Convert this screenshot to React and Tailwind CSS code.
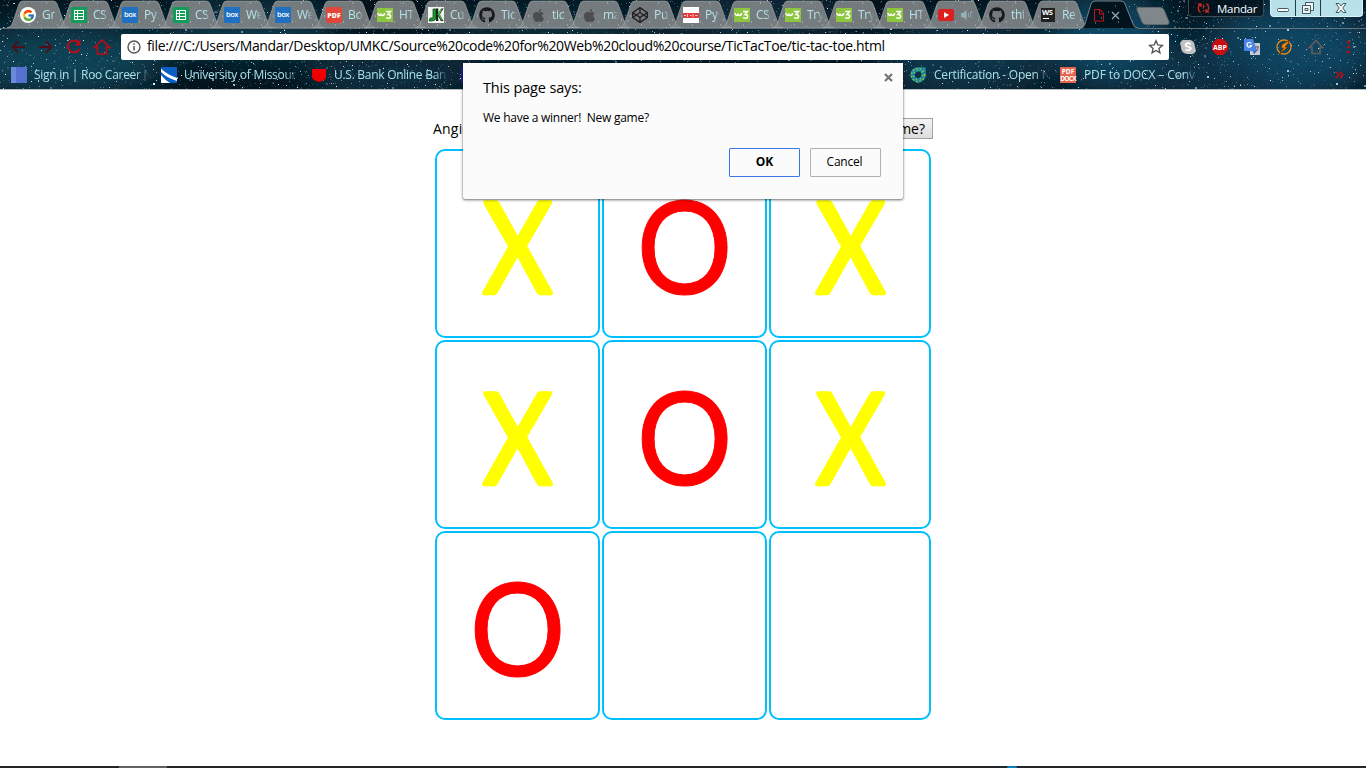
import React from "react";
import { FcGoogle } from "react-icons/fc";
import { FaGithub, FaApple, FaCodepen } from "react-icons/fa";

const UI = "font-['Open_Sans','Noto_Sans',sans-serif]";

/* ---------- starfield behind the browser chrome ---------- */
function makeStars(count, seed) {
  let s = seed;
  const rnd = () => {
    s = (s * 1664525 + 1013904223) % 4294967296;
    return s / 4294967296;
  };
  const tones = ["#e6f0f4", "#a9c6d2", "#6f93a3", "#4c7183", "#35586a", "#2a4a5b", "#1f3f50", "#1a3746"];
  return Array.from({ length: count }, () => {
    const x = Math.floor(rnd() * 1366);
    const y = Math.floor(rnd() * 89);
    const k = rnd();
    const big = rnd() < 0.04;
    return { x, y, c: tones[Math.floor(Math.pow(k, 0.55) * 8)], w: big ? 2 : 1 };
  });
}
const STARS = makeStars(6500, 77);
const CLOUDS = [
  [60, 60, 110, 35, "#0f4558"], [250, 30, 90, 30, "#0d384a"], [560, 35, 120, 25, "#0a2d3d"],
  [760, 20, 90, 30, "#0a2b3a"], [960, 60, 90, 40, "#0c3649"], [1110, 40, 60, 50, "#0f4664"],
  [1290, 50, 90, 50, "#0d4462"], [390, 75, 90, 20, "#0c384b"], [1200, 75, 60, 30, "#0b3346"],
];

function Starfield() {
  return (
    <svg className="absolute inset-0" width="1366" height="89" shapeRendering="crispEdges">
      <defs>
        <filter id="soft" x="-50%" y="-50%" width="200%" height="200%">
          <feGaussianBlur stdDeviation="18" />
        </filter>
      </defs>
      <rect width="1366" height="89" fill="#04121b" />
      <g filter="url(#soft)">
        {CLOUDS.map(([x, y, rx, ry, c], i) => (
          <ellipse key={i} cx={x} cy={y} rx={rx} ry={ry} fill={c} />
        ))}
      </g>
      {STARS.map((s, i) => (
        <rect key={i} x={s.x} y={s.y} width={s.w} height={s.w} fill={s.c} />
      ))}
    </svg>
  );
}

/* ---------- favicons ---------- */
const Google = () => (
  <span className="flex size-4 items-center justify-center rounded-full bg-white"><FcGoogle size={13} /></span>
);
const Sheets = () => (
  <svg width="16" height="16" shapeRendering="crispEdges">
    <rect width="16" height="16" rx="1" fill="#0f9d58" />
    <path d="M3.5 3.5h9v9h-9zM3.5 6.5h9M3.5 9.5h9M6.5 3.5v9" stroke="#fff" fill="none" />
  </svg>
);
const Box = () => (
  <span className="flex size-4 items-center justify-center rounded-[1px] bg-[#1f70c1] pb-px font-['Open_Sans',sans-serif] text-[7.500px] leading-none font-semibold tracking-[-0.5px] text-white">box</span>
);
const Pdf = () => (
  <span className="flex size-4 items-center justify-center rounded-[2px] bg-[#e2463a] font-['Open_Sans',sans-serif] text-[7px] leading-none font-extrabold text-white">PDF</span>
);
const W3 = () => (
  <svg width="16" height="16">
    <rect width="16" height="14" y="1" fill="#8cc63e" />
    <path d="M1 6c0 3 2.800 3 3 .6c.2 2.600 3.400 2.600 3.600-.6M9 4.500h4.500l-2.600 3c2 0 3.200.8 2.600 2.600c-.8 1.600-3 1.500-4.500.4" fill="none" stroke="#fff" strokeWidth="1.500" />
  </svg>
);
const JK = () => (
  <svg width="16" height="16">
    <rect width="16" height="16" fill="#f2f5f0" />
    <path d="M5 2h3v8q0 4-4 4H1l1-3h2q1 0 1-1z" fill="#1c9c2b" stroke="#103c14" strokeWidth=".7" />
    <path d="M8 1.500h2.300v4.500l3-4.500h2.200l-3.600 6 3.600 6.500h-2.700l-2.500-5v5H8z" fill="#222" />
    <path d="M10 8l3.500-5.500M11 7.500l3 5.500" stroke="#35c443" strokeWidth="1.400" />
  </svg>
);
const Python = () => (
  <svg width="16" height="16">
    <rect width="16" height="16" fill="#fff" />
    <path d="M0 6h16v5H0z" fill="#e33b3b" />
    <path d="M1 8.500h2M4.500 7v3M7 8.500h1.500M10 7v3M12 8.500h2.500" stroke="#f8c5c5" />
  </svg>
);
const Tube = () => (
  <svg width="16" height="16"><rect y="2" width="16" height="12" rx="2.500" fill="#d9201f" /><path d="M6 5l5 3-5 3z" fill="#fff" /></svg>
);
const Storm = () => (
  <span className="flex h-3.5 w-3.5 flex-col bg-[#222] px-px font-['Open_Sans',sans-serif] text-[7.500px] leading-[9px] font-bold tracking-[-0.4px] text-white">
    WS
    <span className="mt-px ml-px h-px w-[6px] bg-white" />
  </span>
);
const DocIcon = () => (
  <svg width="16" height="16"><path d="M3.500 2.500h5.500l3.500 4v7.500h-9zM8.500 2.500v4.500h4" fill="none" stroke="#b5121b" strokeWidth="1.100" /></svg>
);
const Speaker = () => (
  <svg width="14" height="14" fill="none" stroke="#93b4ba">
    <path d="M1 5h2l3.500-3v10L3 9H1z" fill="#93b4ba" stroke="none" /><path d="M8.500 5v4M10.500 4v6" opacity=".7" /><path d="M12.500 3v8" opacity=".3" />
  </svg>
);

const TABS = [
  [<Google />, "Gr"], [<Sheets />, "CS"], [<Box />, "Py."], [<Sheets />, "CS"], [<Box />, "We"], [<Box />, "We"],
  [<Pdf />, "Bo"], [<W3 />, "HT"], [<JK />, "Cu"], [<FaGithub size={16} color="#17191c" />, "Tic"],
  [<FaApple size={15} color="#4b4d4e" />, "tic"], [<FaApple size={15} color="#4b4d4e" />, "ma"],
  [<FaCodepen size={16} color="#222" />, "Pu"], [<Python />, "Py"], [<W3 />, "CS"], [<W3 />, "Try"], [<W3 />, "Try"],
  [<W3 />, "HT"], [<Tube />, <Speaker />], [<FaGithub size={16} color="#17191c" />, "thi"], [<Storm />, "Re"],
];

function Tab({ icon, label }) {
  return (
    <div className="relative h-7 w-[51px] shrink-0">
      <svg className="absolute top-0 left-0" width="66" height="28">
        <path d="M0 27.500C4 27 4.500 25 5.500 23L12 4Q13 1 16 1H46Q49 1 50 4L57 23Q58.500 27 62 27.500z" fill="#85898a" fillOpacity=".87" stroke="#b1b6b8" strokeOpacity=".55" />
        <path d="M46 12h1M22 25h1M53 20h1M11 16h1M39 3h1M30 22h1M50 25h1" stroke="#c4cbcd" />
      </svg>
      <div className="relative flex h-[30px] items-center pl-[13px]">
        <span className="flex w-4 shrink-0 justify-center">{icon}</span>
        <span className="ml-1.5 w-4 shrink-0 overflow-hidden text-[12px] tracking-[-0.3px] whitespace-nowrap text-[#b6e2e9] [mask-image:linear-gradient(90deg,#000_60%,transparent)]">{label}</span>
      </div>
    </div>
  );
}

function TabStrip() {
  return (
    <div className="relative flex h-7 items-start pl-[7px]">
      {TABS.map(([icon, label], i) => <Tab key={i} icon={icon} label={label} />)}
      <div className="relative h-7 w-[58px] shrink-0">
        <svg className="absolute top-0 left-0" width="66" height="29">
          <path d="M4 28Q6 27 7 24L13 4Q14 1 17 1H43Q46 1 47 4L55 24Q56 28 60 28z" fill="#03131d" />
          <path d="M4 28Q6 27 7 24L13 4Q14 1 17 1H43Q46 1 47 4L55 24Q56 28 60 28" fill="none" stroke="#798286" />
          <path d="M23 18h1M37 6h1M40 22h1M17 23h1M30 12h1" stroke="#8aa2ad" />
        </svg>
        <div className="relative flex h-[30px] items-center pl-[13px]">
          <DocIcon />
          <svg className="ml-1" width="9" height="9"><path d="M1 1l7 7M8 1l-7 7" stroke="#8fa9b0" strokeWidth="1.300" /></svg>
        </div>
      </div>
      <svg className="mt-[7px]" width="34" height="18"><path d="M2 .5H24Q27 .5 28 3L33 15Q33.500 17.500 31 17.500H10Q7 17.500 6 15L1 3Q.5 .5 2 .5z" fill="#80878a" stroke="#5f686c" /></svg>
      <div className="ml-[18px] flex h-[17px] w-[76px] items-center rounded-b border border-t-0 border-[#3c4c55] bg-[#03101a]/70">
        <svg className="ml-2" width="13" height="12" fill="none" stroke="#bd2a20" strokeWidth="1.500">
          <path d="M3.500 10.500Q-1 6 3.500 2M1 2h3v3M9.500 1.500Q14 6 9.500 10M12 10H9V7M6.500 2.500v4M6.500 8v1.500" />
        </svg>
        <span className="mt-px ml-[7px] text-[11.500px] leading-4 tracking-[-0.3px] text-white">Mandar</span>
      </div>
      <div className="ml-[6px] flex h-[17px] w-[93px] rounded-b border border-t-0 border-[#dbf3f6] bg-[#b9e1e9]">
        <svg width="91" height="16" fill="none" stroke="#47575d">
          <path d="M24.500 0v16M49.500 0v16" stroke="#243c46" />
          <rect x="6.500" y="8.500" width="11" height="3" rx="1" fill="#f7fcfd" />
          <path d="M34.500 2.500h8v8h-8z" fill="#eef8fa" /><path d="M31.500 5.500h8v8h-8zM34 8.500h3v2h-3z" fill="#eef8fa" />
          <path d="M65 3.500h3l2 2.500 2-2.500h3l-3.300 4.500 3.300 4.500h-3l-2-2.500-2 2.500h-3l3.300-4.500z" fill="#f7fcfd" />
        </svg>
      </div>
    </div>
  );
}

function Toolbar() {
  return (
    <div className="relative flex h-[38px] items-center pl-2">
      <div className="absolute top-0 left-0 h-px w-[1082px] bg-[#798286]/80" />
      <div className="absolute top-0 right-0 h-px w-[228px] bg-[#798286]/80" />
      <svg className="shrink-0" width="113" height="26" fill="none" stroke="#ba0c17">
        <g stroke="#4a1118" strokeWidth="1.800"><path d="M17 13H4.500M10 7.500L4.500 13l5.500 5.500M31 13h12.500M38 7.500l5.500 5.500-5.500 5.500" /></g>
        <path d="M70.500 8.500A6 6 0 1 0 71.500 15" strokeWidth="2" /><path d="M72.500 5.500v6h-6z" fill="#ba0c17" stroke="none" />
        <path d="M86.500 13.500L94 6l7.500 7.500h-3v6.500h-9v-6.500z" strokeWidth="1.700" />
      </svg>
      <div className="flex h-[26px] w-[1048px] shrink-0 items-center rounded-[2px] bg-white">
        <svg className="ml-[6px]" width="14" height="14" fill="none" stroke="#555"><circle cx="7" cy="7" r="6" strokeWidth="1.400" /><path d="M7 6v4.500M7 3.300v1.500" strokeWidth="1.500" /></svg>
        <span className="mb-0.5 ml-[6px] flex-1 text-[14px] leading-5 tracking-[-0.35px] whitespace-nowrap text-black">file:///C:/Users/Mandar/Desktop/UMKC/Source%20code%20for%20Web%20cloud%20course/TicTacToe/tic-tac-toe.html</span>
        <svg className="mr-[5px]" width="16" height="16" fill="none" stroke="#505050" strokeWidth="1.300"><path d="M8 1.700l1.800 4.300 4.600.4-3.500 3 1.100 4.500L8 11.500l-4 2.400 1.100-4.500-3.500-3 4.600-.4z" /></svg>
      </div>
      <div className="flex items-center gap-4 pl-[11px]">
        <svg width="16" height="16"><path d="M5 1h5q5 1 5 7l1 4q-2 4-5 3H7Q1 14 1 8L0 4Q2 0 5 1z" fill="#bfc1c2" /><path d="M10.700 5.200Q8 3.200 6 4.800T8 7.700t2.500 2Q10 12.300 5.500 10.800" fill="none" stroke="#fff" strokeWidth="1.700" /></svg>
        <span className="flex size-4 items-center justify-center bg-[#c70d10] text-[7px] leading-none font-bold text-white [clip-path:polygon(30%_0,70%_0,100%_30%,100%_70%,70%_100%,30%_100%,0_70%,0_30%)]">ABP</span>
        <svg width="16" height="16"><rect x="6" y="4" width="10" height="12" fill="#c8cbd0" /><path d="M0 0h9l4 12H1q-1 0-1-1z" fill="#4a86e8" /><path d="M8.500 12h4.500l-3 3z" fill="#3367d6" /><path d="M7.200 4.500A2.300 2.300 0 1 0 7.500 6.500H5.500" fill="none" stroke="#fff" strokeWidth="1.200" /><path d="M11 8h4M13 7v1M14.500 8q-1 3-3 4M12.500 10l2 2" fill="none" stroke="#667" /></svg>
        <svg width="16" height="16" fill="none" stroke="#e98b18"><circle cx="8" cy="8" r="7" strokeWidth="1.300" /><path d="M13.500 1L6 5.500 5 9h2.500L3.500 15 12 8H9l3-3.500z" fill="#e98b18" stroke="#5a2e04" strokeWidth=".8" /></svg>
        <svg width="16" height="16" fill="none" stroke="#635c5c" strokeWidth="1.600"><path d="M1.500 8.500L8 1.500l6.500 7h-2.500v6h-8v-6z" /></svg>
        <svg width="16" height="16" fill="#b60c14"><circle cx="8.500" cy="3" r="1.600" /><circle cx="8.500" cy="8" r="1.600" /><circle cx="8.500" cy="13" r="1.600" /></svg>
      </div>
    </div>
  );
}

const BlueSquare = () => <svg width="16" height="16"><rect width="16" height="16" fill="#5571cf" /><path d="M0 0h5v16H0z" fill="#6d89dc" /></svg>;
const Swoosh = () => <svg width="16" height="16"><rect width="16" height="16" fill="#0b5fc4" /><path d="M0 1.500Q5 7 16 11v3Q6 11 0 5zM0 8q4 5 9 8H0z" fill="#fff" /></svg>;
const Shield = () => <svg width="16" height="16"><path d="M1 2h14v8q0 3-7 5-7-2-7-5z" fill="#e00" /></svg>;
const Ring = () => (
  <svg width="16" height="16" fill="none"><path d="M9 2.500A5.500 5.500 0 1 0 13.500 9V2.500H9" stroke="#1687a0" strokeWidth="4.500" /><circle cx="8" cy="8" r="6.500" stroke="#a5c13a" strokeWidth="1.500" strokeDasharray="1.500 2" /><circle cx="8" cy="8" r="4.500" stroke="#c2cf3a" strokeWidth="1.200" strokeDasharray="1 3" /></svg>
);
const PdfDocx = () => (
  <span className="flex size-4 flex-col items-center justify-center bg-[#e4644d] text-[6.500px] leading-[7.500px] font-bold text-white"><span>PDF</span><span className="tracking-[-0.7px]">DOCX</span></span>
);

function Bookmark({ icon, label, width, gap = "ml-2" }) {
  return (
    <div className="flex w-[150px] shrink-0 items-center">
      {icon}
      <span className={`${gap} ${width} overflow-hidden text-[12px] leading-4 whitespace-nowrap text-[#a9e0e8] [mask-image:linear-gradient(90deg,#000_88%,transparent)]`}>{label}</span>
    </div>
  );
}

function BookmarkBar() {
  return (
    <div className="relative flex h-[18px] items-center pl-[11px]">
      <Bookmark icon={<BlueSquare />} label="Sign in | Roo Career N" width="w-[116px] tracking-[-0.28px]" gap="ml-[7px]" />
      <Bookmark icon={<Swoosh />} label="University of Missour" width="w-[114px] tracking-[-0.28px]" gap="ml-[7px]" />
      <Bookmark icon={<Shield />} label="U.S. Bank Online Ban" width="w-[114px] tracking-[-0.28px]" gap="ml-[7px]" />
      <div className="w-[449px] shrink-0"><div className="size-4 bg-[#1c1c9a]" /></div>
      <Bookmark icon={<Ring />} label="Certification - Open N" width="w-[115px] tracking-[-0.2px]" />
      <Bookmark icon={<PdfDocx />} label="PDF to DOCX – Conv" width="w-[114px] tracking-[-0.1px]" />
      <svg className="ml-[125px]" width="9" height="8" fill="none" stroke="#b60c14" strokeWidth="1.700"><path d="M1 1l3 3-3 3M5 1l3 3-3 3" /></svg>
    </div>
  );
}

/* ---------- game ---------- */
function Mark({ value }) {
  if (!value) return null;
  const isX = value === "X";
  return (
    <svg width="161" height="185" className="overflow-visible">
      <g transform={isX ? "translate(80.5 142.3) scale(0.84 1)" : "translate(80.5 143) scale(0.925 1)"}>
        <text textAnchor="middle" fontFamily="Lato" fontSize={isX ? 127 : 130} strokeLinejoin="round" strokeWidth={isX ? 4.6 : 1} fill={isX ? "#ffff00" : "#ff0000"} stroke={isX ? "#ffff00" : "#ff0000"}>{value}</text>
      </g>
    </svg>
  );
}

const BOARD = ["X", "O", "X", "X", "O", "X", "O", "", ""];

function Game() {
  return (
    <main className="flex flex-1 flex-col pt-7 pl-[433px]">
      <div className="flex h-[21px] w-[500px] items-center justify-between text-[14px]">
        <span className="tracking-[0.2px]">Angie</span>
        <button className="h-[21px] border border-[#a2a2a2] bg-linear-to-b from-[#f4f4f4] to-[#dcdcdc] px-[7px] text-[14px] leading-[18px]">New game?</button>
      </div>
      <div className="mt-[10px] ml-[2px] grid grid-cols-[165px_165px_162px] grid-rows-[189px_189px_189px] gap-[2px]">
        {BOARD.map((v, i) => (
          <div key={i} className="flex items-center justify-center overflow-hidden rounded-[10px] border-2 border-[#00bfff]"><Mark value={v} /></div>
        ))}
      </div>
    </main>
  );
}

function Dialog() {
  return (
    <div className="absolute top-[63px] left-[463px] flex h-[136px] w-[440px] flex-col rounded-b-[2px] bg-[#fbfbfb] pr-[22px] pl-5 shadow-[0_1px_3px_rgba(0,0,0,0.55),0_0_1px_rgba(0,0,0,0.5)]">
      <svg className="absolute top-[10px] right-[10px]" width="9" height="9"><path d="M1 1l7 7M8 1L1 8" stroke="#757575" strokeWidth="2.200" /></svg>
      <h1 className="mt-[15px] text-[14.500px] leading-5 tracking-[-0.15px] text-black">This page says:</h1>
      <p className="mt-[12px] text-[12px] leading-4 tracking-[-0.26px] whitespace-pre text-black">We have a winner!  New game?</p>
      <div className="mt-[22px] flex justify-end gap-[10px] text-[12px] text-black">
        <button className="h-[29px] w-[71px] rounded-[1px] border border-[#3b78e7] pb-0.5 font-bold">OK</button>
        <button className="h-[29px] w-[71px] rounded-[1px] border border-[#b0b0b0] pr-[2px] pb-0.5 tracking-[-0.2px]">Cancel</button>
      </div>
    </div>
  );
}

export default function App() {
  return (
    <div className={`relative flex h-[768px] w-[1366px] flex-col overflow-hidden bg-white text-black ${UI}`}>
      <header className="relative h-[90px] shrink-0 overflow-hidden border-b border-[#b9bdc0] bg-[#030e16]">
        <Starfield />
        <TabStrip />
        <Toolbar />
        <BookmarkBar />
      </header>
      <Game />
      <footer className="flex h-[2px] shrink-0 bg-[#25262a]">
        <div className="ml-[119px] h-[2px] w-12 bg-[#626262]" />
        <div className="ml-[840px] h-[2px] w-[10px] rounded-t bg-[#0a7fc0]" />
      </footer>
      <Dialog />
    </div>
  );
}
